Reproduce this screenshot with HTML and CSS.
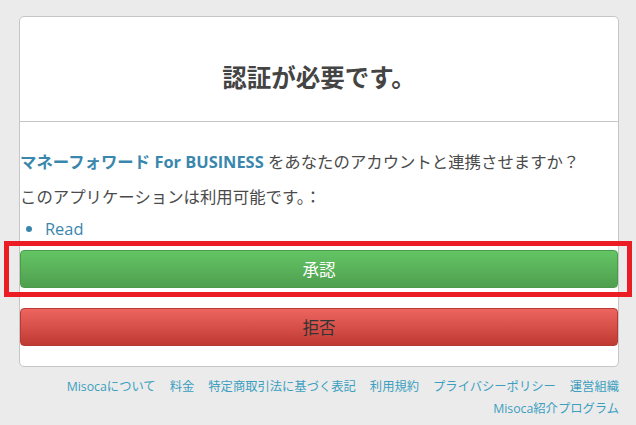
FILE: index.html
```html
<!DOCTYPE html>
<html lang="ja">
<head>
    <meta charset="UTF-8">
    <meta name="viewport" content="width=device-width, initial-scale=1.0">
    <title>認証が必要です。</title>
    <link rel="stylesheet" href="styles.css">
</head>
<body>
    <div class="wrap">
        <!-- Authorization card -->
        <div class="card">
            <div class="card-header">
                <h1>認証が必要です。</h1>
            </div>
            <div class="card-body">
                <p class="ask"><strong class="app-name">マネーフォワード For BUSINESS</strong> をあなたのアカウントと連携させますか？</p>
                <p class="scope-title">このアプリケーションは利用可能です。：</p>
                <ul class="scopes">
                    <li>Read</li>
                </ul>

                <div class="highlight">
                    <button class="btn btn-success">承認</button>
                </div>
                <button class="btn btn-danger">拒否</button>
            </div>
        </div>

        <!-- Footer links -->
        <div class="footer">
            <div class="footer-row">
                <a href="#">Misocaについて</a>
                <a href="#">料金</a>
                <a href="#">特定商取引法に基づく表記</a>
                <a href="#">利用規約</a>
                <a href="#">プライバシーポリシー</a>
                <a href="#">運営組織</a>
            </div>
            <div class="footer-row">
                <a href="#">Misoca紹介プログラム</a>
            </div>
        </div>
    </div>
</body>
</html>
```

FILE: styles.css
```css
body {
    margin: 0;
    background-color: #ebebeb;
    font-family: "Open Sans", "Noto Sans CJK JP", sans-serif;
    color: #4a4a4a;
}

.wrap {
    width: 600px;
    margin: 16px 0 0 19px;
}

.card {
    background-color: #fff;
    border: 1px solid #c6c6c6;
    border-radius: 5px;
}

.card-header {
    height: 104px;
    border-bottom: 1px solid #c6c6c6;
    display: flex;
    align-items: center;
    justify-content: center;
}

.card-header h1 {
    margin: 14px 0 0;
    font-size: 24.5px;
    font-weight: bold;
    color: #444;
}

.card-body {
    padding: 28px 0 20px;
    font-size: 16.4px;
}

.card-body p {
    margin: 0;
    line-height: 24px;
}

.ask {
    margin-bottom: 11px !important;
}

.scope-title {
    margin-bottom: 8px !important;
}

.app-name {
    color: #3a87ad;
    font-weight: bold;
}

.scopes {
    margin: 0;
    padding-left: 25px;
    color: #3a87ad;
    line-height: 24px;
}

.highlight {
    position: relative;
    margin-top: 9px;
}

.highlight::after {
    content: "";
    position: absolute;
    top: -9px;
    bottom: -9px;
    left: -16px;
    right: -14px;
    border: 5px solid #ec1c24;
}

.btn {
    display: block;
    width: 100%;
    height: 38px;
    border-radius: 4px;
    font-family: "Open Sans", "Noto Sans CJK JP", sans-serif;
    font-size: 16.5px;
    cursor: pointer;
}

.btn-success {
    color: #fff;
    background: linear-gradient(#64c564, #4f9f4f);
    border: 1px solid #4c9a4c;
}

.btn-danger {
    margin-top: 20px;
    color: #333;
    background: linear-gradient(#ee6560, #bf3a33);
    border: 1px solid #b53a33;
}

.footer {
    padding-top: 9px;
    font-size: 12.3px;
    line-height: 22px;
}

.footer-row {
    display: flex;
    justify-content: flex-end;
    gap: 14px;
}

.footer a {
    color: #3c9fc0;
    text-decoration: none;
}
```
